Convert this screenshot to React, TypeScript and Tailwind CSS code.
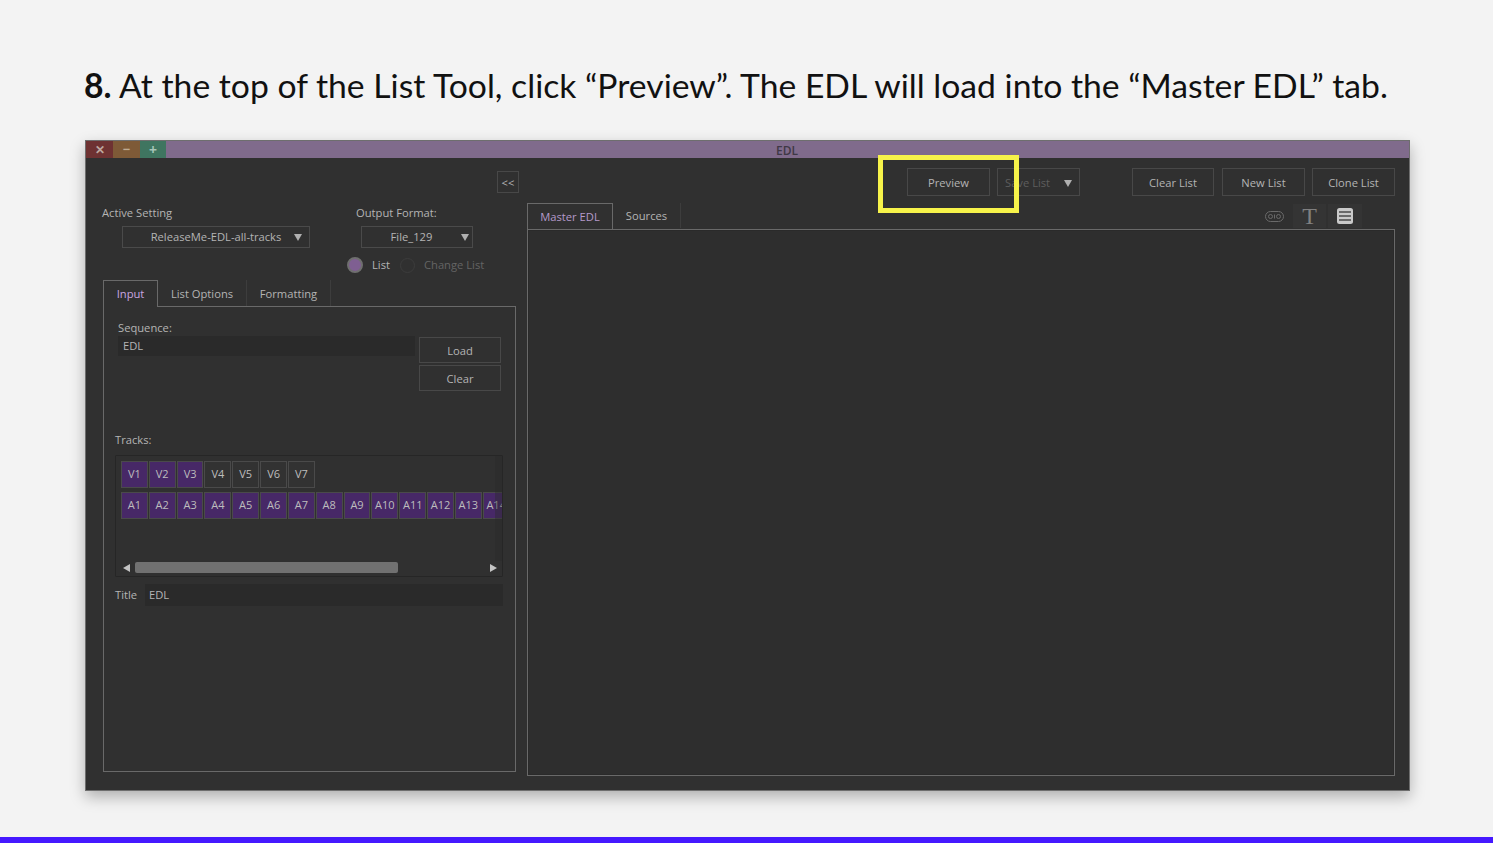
import React from 'react';

const uiFont = "font-['Open_Sans',sans-serif]";

const Btn = ({ label, className = '' }: { label: string; className?: string }) => (
  <button className={`flex items-center justify-center border border-[#484848] pt-[2px] text-[11.2px] text-[#b4b4b4] ${className}`}>
    {label}
  </button>
);

const Caret = () => (
  <svg width="8" height="7" viewBox="0 0 8 7" className="shrink-0">
    <path d="M0 0h8L4 7z" fill="#b0b0b0" />
  </svg>
);

const Select = ({ label, className = '', textClass = '' }: { label: string; className?: string; textClass?: string }) => (
  <div className={`flex h-[22px] items-center border border-[#4a4a4a] text-[11.2px] text-[#b4b4b4] ${className}`}>
    <span className={`flex-1 text-center ${textClass}`}>{label}</span>
    <Caret />
  </div>
);

const TrackBtn = ({ label, on }: { label: string; on: boolean }) => (
  <div
    className={`flex h-[27px] w-[26.83px] shrink-0 items-center justify-center border border-[#4a4a4a] text-[11px] text-[#bdbdbd] ${
      on ? 'bg-[#472867]' : 'bg-[#323232]'
    }`}
  >
    {label}
  </div>
);

const videoTracks = ['V1', 'V2', 'V3', 'V4', 'V5', 'V6', 'V7'];
const audioTracks = ['A1', 'A2', 'A3', 'A4', 'A5', 'A6', 'A7', 'A8', 'A9', 'A10', 'A11', 'A12', 'A13', 'A14'];

const App = () => {
  return (
    <div className="flex h-[843px] w-[1493px] flex-col overflow-hidden bg-[#f3f3f3]">
      <h1 className="ml-[84px] mt-[64px] h-[76px] font-['Lato',sans-serif] text-[33.7px] leading-[43px] text-[#111]">
        <b>8.</b> At the top of the List Tool, click “Preview”. The EDL will load into the “Master EDL” tab.
      </h1>

      <div className={`relative ml-[85px] h-[651px] w-[1325px] border border-[#6e6e6e] bg-[#303030] shadow-[0_6px_14px_rgba(0,0,0,0.28)] ${uiFont}`}>
        {/* title bar */}
        <div className="flex h-[17px] items-center bg-[#806b8c]">
          <div className="flex h-full w-[27px] items-center justify-center bg-[#6e3232] text-[12px] font-bold text-[#bda79f]">✕</div>
          <div className="flex h-full w-[27px] items-center justify-center bg-[#7e5a37] text-[13px] font-bold text-[#c0ab92]">−</div>
          <div className="flex h-full w-[26px] items-center justify-center bg-[#3f7560] text-[14px] font-bold text-[#a7c4b8]">+</div>
          <div className="flex-1 pl-[610px] pt-[2px] text-[12px] font-semibold text-[#3f3845]">EDL</div>
        </div>

        {/* top buttons */}
        <div className="flex h-[45px] items-start pl-[411px] pt-[10px]">
          <Btn label="<<" className="mt-[3px] h-[22px] w-[22px] text-[10px]" />
          <Btn label="Preview" className="ml-[388px] h-[28px] w-[83px]" />
          <div className="ml-[7px] flex h-[28px] w-[83px] items-center border border-[#484848] pl-[7px] pr-[7px] pt-[2px] text-[11.2px] text-[#5e5e5e]">
            <span className="flex-1">Save List</span>
            <Caret />
          </div>
          <Btn label="Clear List" className="ml-[52px] h-[28px] w-[82px]" />
          <Btn label="New List" className="ml-[8px] h-[28px] w-[83px]" />
          <Btn label="Clone List" className="ml-[7px] h-[28px] w-[83px]" />
        </div>

        <div className="flex pl-[17px]">
          {/* left column */}
          <div className="w-[413px]">
            <div className="flex h-[18px] items-center pt-[3px] text-[11.2px] text-[#b4b4b4]">
              <span className="-ml-px w-[254px]">Active Setting</span>
              <span>Output Format:</span>
            </div>
            <div className="mt-[5px] flex">
              <Select label="ReleaseMe-EDL-all-tracks" className="ml-[19px] w-[188px] pr-[7px]" textClass="pl-[15px]" />
              <Select label="File_129" className="ml-[51px] w-[112px] pr-[3px]" />
            </div>
            <div className="mt-[6px] flex h-[22px] items-center pl-[244px] text-[11.2px]">
              <span className="h-[16px] w-[16px] rounded-full border-2 border-[#6f6f6f] bg-[#7f5f92]" />
              <span className="ml-[9px] text-[#b4b4b4]">List</span>
              <span className="ml-[10px] h-[15px] w-[15px] rounded-full border border-[#3c3c3c]" />
              <span className="ml-[9px] text-[#646464]">Change List</span>
            </div>
            <div className="mt-[4px] flex h-[26px] text-[11.2px] text-[#b4b4b4]">
              <div className="relative z-10 flex h-[27px] w-[55px] items-center justify-center border border-b-0 border-[#696969] bg-[#303030] text-[#c9a6e0]">Input</div>
              <div className="flex w-[89px] items-center justify-center border-r border-[#3d3d3d] pt-[3px]">List Options</div>
              <div className="flex w-[84px] items-center justify-center border-r border-[#3d3d3d] pt-[3px]">Formatting</div>
            </div>

            {/* input panel */}
            <div className="h-[466px] border border-[#696969] pl-[11px] pr-[11px] text-[11.2px] text-[#b4b4b4]">
              <div className="flex h-[43px] pt-[13px]">
                <span className="ml-[3px]">Sequence:</span>
              </div>
              <div className="-mt-[15px] flex pl-[3px]">
                <div className="mt-px flex h-[20px] w-[297px] items-center border border-[#2a2a2a] bg-[#2a2a2a] pl-[4px]">EDL</div>
                <div className="ml-[4px] flex w-[83px] flex-col gap-[2px] pt-[2px]">
                  <Btn label="Load" className="h-[26px] w-[82px]" />
                  <Btn label="Clear" className="h-[26px] w-[82px]" />
                </div>
              </div>
              <div className="mt-[40px] flex h-[18px] items-center">Tracks:</div>

              {/* tracks box */}
              <div className="relative mt-[6px] h-[122px] w-[388px] overflow-hidden rounded-[1px] border border-[#262626] pl-[5px] pt-[5px]">
                <div className="flex gap-px">
                  {videoTracks.map((t, i) => (
                    <TrackBtn key={t} label={t} on={i < 3} />
                  ))}
                </div>
                <div className="mt-[4px] flex gap-px">
                  {audioTracks.map((t) => (
                    <TrackBtn key={t} label={t} on />
                  ))}
                </div>
                <div className="absolute right-0 top-0 h-[105px] w-[7px] bg-[#2a2a2a]/40" />
                <div className="mt-[43px] flex h-[11px] items-center pl-[2px] pr-[5px]">
                  <svg width="7" height="8" viewBox="0 0 7 8" className="shrink-0">
                    <path d="M7 0v8L0 4z" fill="#c4c4c4" />
                  </svg>
                  <div className="ml-[5px] h-[11px] w-[263px] rounded-[2px] bg-[#717171]" />
                  <svg width="7" height="8" viewBox="0 0 7 8" className="ml-auto shrink-0">
                    <path d="M0 0v8l7-4z" fill="#c4c4c4" />
                  </svg>
                </div>
              </div>

              <div className="mt-[7px] flex h-[22px] items-center pt-px">
                <span className="w-[30px]">Title</span>
                <div className="-mt-px flex h-[22px] w-[358px] items-center bg-[#2a2a2a] pl-[4px] pt-px">EDL</div>
              </div>
            </div>
          </div>

          {/* right column */}
          <div className="ml-[11px] w-[868px]">
            <div className="flex h-[25px] items-end text-[11.2px] text-[#b4b4b4]">
              <div className="relative z-10 -mb-px flex h-[26px] w-[86px] items-center justify-center border border-b-0 border-[#696969] bg-[#303030] pt-px text-[#b59acb]">Master EDL</div>
              <div className="flex h-[25px] w-[68px] items-center justify-center border-r border-[#3d3d3d] pt-px">Sources</div>
              <div className="ml-[577px] flex h-[24px] w-[33px] items-center justify-center">
                <svg width="19" height="11" viewBox="0 0 19 11" fill="none" stroke="#6a6a6a">
                  <rect x="0.5" y="0.5" width="18" height="10" rx="5" />
                  <circle cx="5.5" cy="5.5" r="2" />
                  <circle cx="13.5" cy="5.5" r="2" />
                  <path d="M9.5 3.5v4" />
                </svg>
              </div>
              <div className="ml-[2px] flex h-[24px] w-[33px] items-center justify-center bg-[#343434] font-['Liberation_Serif',serif] text-[24px] leading-none text-[#808080]">T</div>
              <div className="ml-[2px] flex h-[24px] w-[34px] items-center justify-center bg-[#343434]">
                <svg width="16" height="16" viewBox="0 0 16 16">
                  <rect width="16" height="16" rx="2.5" fill="#c9c9c9" />
                  <path d="M2 4h12M2 8h12M2 12h12" stroke="#4a4a4a" strokeWidth="1.3" />
                </svg>
              </div>
            </div>
            <div className="mt-px h-[547px] border border-[#696969] bg-[#2e2e2e] shadow-[inset_0_0_0_1px_#2a2a2a]" />
          </div>
        </div>

        {/* highlight drawn over the toolbar */}
        <div className="absolute left-[792px] top-[14px] h-[58px] w-[141px] border-[5px] border-[#f7f34a]" />
      </div>

      <div className="mt-auto h-[6px] bg-[#4518ff]" />
    </div>
  );
};

export default App;
